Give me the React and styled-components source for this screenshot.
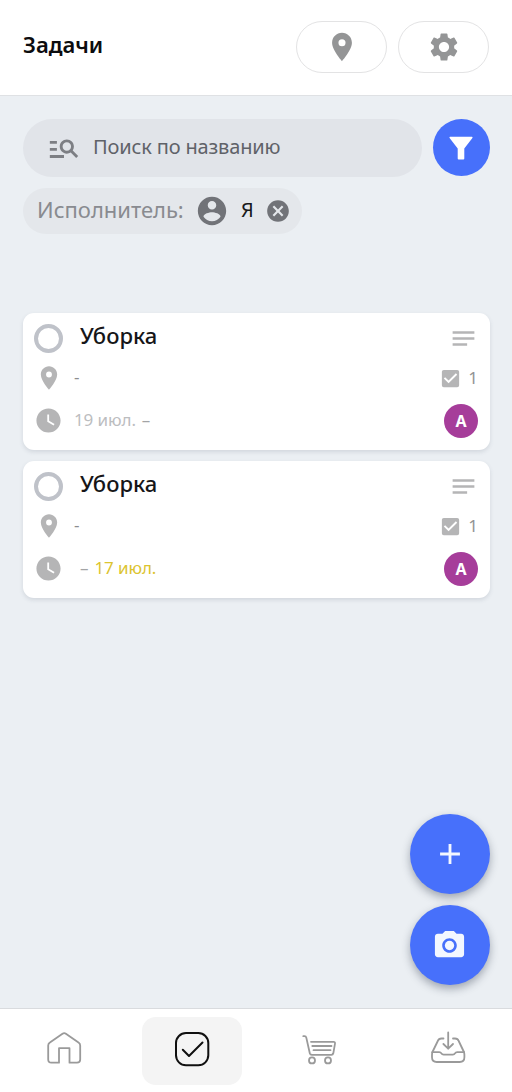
import styled, { createGlobalStyle, css } from "styled-components";
import {
    MdPlace, MdSettings, MdManageSearch, MdCancel,
    MdNotes, MdCheckBox, MdWatchLater, MdAdd, MdPhotoCamera,
} from "react-icons/md";

const tasks = [
    { id: 1, title: "Уборка", place: "-", from: "19 июл.", to: "", checks: 1, user: "A" },
    { id: 2, title: "Уборка", place: "-", from: "", to: "17 июл.", checks: 1, user: "A" },
];

const FilterIcon = () => (
    <svg width="24" height="24" viewBox="0 0 24 24" fill="#fff">
        <path d="M1 .8h22q1 .2.4 1.100L15.300 12.500v10q0 1-1 1H9.700q-1 0-1-1v-10L.6 1.900Q0 1 1 .8z" />
    </svg>
)

const UserIcon = () => (
    <svg width="34" height="34" viewBox="0 0 24 24" fill="currentColor">
        <path d="M12 2C6.480 2 2 6.480 2 12s4.480 10 10 10 10-4.480 10-10S17.520 2 12 2zm0 3c1.660 0 3 1.340 3 3s-1.340 3-3 3-3-1.340-3-3 1.340-3 3-3zm0 14.200c-2.500 0-4.710-1.280-6-3.220.030-1.990 4-3.080 6-3.080 1.990 0 5.970 1.090 6 3.080-1.290 1.940-3.500 3.220-6 3.220z" />
    </svg>
)

const HomeIcon = () => (
    <NavSvg viewBox="0 0 36 36">
        <path d="M2.200 14.500q0-2 1.700-3L16.500 2.800q1.700-1.200 3.400 0L32.500 11.500q1.700 1 1.700 3V28.500q0 3.200-3.200 3.200h-7.500V17.200H13V31.700H5.400q-3.200 0-3.200-3.200z" />
    </NavSvg>
)

const TasksIcon = () => (
    <NavSvg viewBox="0 0 36 36" $active>
        <rect x="2" y="2" width="32.300" height="32.300" rx="10" />
        <path d="M8.800 18.800l6.200 6.200L28.500 11.500" />
    </NavSvg>
)

const CartIcon = () => (
    <NavSvg viewBox="0 0 36 36">
        <path d="M1.300 5.200h1.200q1.500 0 1.800 1.400L7.800 22.300q.4 1.500 2 1.500h19.500q1.700 0 2-1.500L33 12.600q.3-1.800-1.500-1.800H9" />
        <path d="M10.300 15h19.200M11.500 19.200h17" />
        <circle cx="10" cy="29.400" r="3" />
        <circle cx="26" cy="29.400" r="3" />
    </NavSvg>
)

const InboxIcon = () => (
    <NavSvg viewBox="0 0 36 36">
        <path d="M13.500 7.500h-2q-2.800 0-3.700 2.500L2.700 20.500Q2 22 2 23.700v2.600q0 4.700 4.700 4.700h23q4.700 0 4.700-4.700v-2.600q0-1.700-.7-3.200L28.700 10q-.9-2.500-3.700-2.500h-2" />
        <path d="M2.200 21.200h7q1.500 0 2.200 1.200t2.200 1.200h9.200q1.500 0 2.200-1.200t2.200-1.200h7" />
        <path d="M18.200 1.500v16.200M13.400 13l4.800 4.700L23 13" />
    </NavSvg>
)

const Task = ({ task }) => {
    return (
        <Card>
            <IconCell><Ring /></IconCell>
            <TaskTitle>{task.title}</TaskTitle>
            <Side><MdNotes size={29} /></Side>

            <IconCell><MdPlace size={28} /></IconCell>
            <Place>{task.place}</Place>
            <Side><MdCheckBox size={23} /><Count>{task.checks}</Count></Side>

            <IconCell><MdWatchLater size={29} /></IconCell>
            <Dates $indent={!task.from}>
                {task.from && <From>{task.from}</From>}
                <span>–</span>
                {task.to && <Due>{task.to}</Due>}
            </Dates>
            <Side><Avatar>{task.user}</Avatar></Side>
        </Card>
    )
}

export default function App() {
    return (
        <>
            <GlobalStyle />
            <Page>
                <Header>
                    <Title>Задачи</Title>
                    <PillButton aria-label="Карта"><MdPlace size={34} /></PillButton>
                    <PillButton aria-label="Настройки"><MdSettings size={34} /></PillButton>
                </Header>
                <Main>
                    <SearchRow>
                        <Search>
                            <MdManageSearch size={34} />
                            <Placeholder>Поиск по названию</Placeholder>
                        </Search>
                        <FilterButton aria-label="Фильтр"><FilterIcon /></FilterButton>
                    </SearchRow>
                    <Chip>
                        <ChipLabel>Исполнитель:</ChipLabel>
                        <UserIcon />
                        <ChipValue>Я</ChipValue>
                        <MdCancel size={26} />
                    </Chip>
                    <List>
                        {tasks.map((task) => <Task key={task.id} task={task} />)}
                    </List>
                    <Fabs>
                        <Fab aria-label="Добавить"><MdAdd size={34} /></Fab>
                        <Fab aria-label="Камера"><MdPhotoCamera size={35} /></Fab>
                    </Fabs>
                </Main>
                <Nav>
                    <NavItem><HomeIcon /></NavItem>
                    <NavItem $active><TasksIcon /></NavItem>
                    <NavItem><CartIcon /></NavItem>
                    <NavItem><InboxIcon /></NavItem>
                </Nav>
            </Page>
        </>
    );
}

const GlobalStyle = createGlobalStyle`
    * {
        box-sizing: border-box;
    }
    body {
        margin: 0;
        font-family: "Noto Sans", "Open Sans", sans-serif;
    }
    svg {
        display: block;
        flex-shrink: 0;
    }
    button {
        font: inherit;
        padding: 0;
        border: 0;
    }
`;

const center = css`
    display: flex;
    align-items: center;
    justify-content: center;
`;

const Page = styled.div`
    display: flex;
    flex-direction: column;
    height: 1092px;
    background: #ebeff3;
`;

const Header = styled.header`
    display: flex;
    align-items: center;
    gap: 11px;
    height: 96px;
    padding: 0 23px 2px 23px;
    background: #fff;
    border-bottom: 1px solid #dfe1e4;
`;

const Title = styled.h1`
    flex: 1;
    margin: 0;
    padding-bottom: 6px;
    font-size: 22px;
    line-height: 30px;
    font-weight: 600;
    color: #0c0c0e;
`;

const PillButton = styled.button`
    ${center}
    width: 91px;
    height: 52px;
    border: 1.5px solid #e3e3e4;
    border-radius: 26px;
    background: #fff;
    color: #949596;
`;

const Main = styled.main`
    flex: 1;
    display: flex;
    flex-direction: column;
    padding: 23px 22.5px 23px 23px;
`;

const SearchRow = styled.div`
    display: flex;
    align-items: center;
    gap: 11px;
`;

const Search = styled.div`
    flex: 1;
    display: flex;
    align-items: center;
    height: 58px;
    padding-left: 24px;
    gap: 12px;
    border-radius: 29px;
    background: #e1e4e9;
    color: #7d7f84;
`;

const Placeholder = styled.span`
    padding-bottom: 3px;
    font-size: 20px;
    line-height: 28px;
    letter-spacing: -0.16px;
    white-space: nowrap;
    color: #5f6268;
`;

const FilterButton = styled.button`
    ${center}
    width: 57px;
    height: 57px;
    margin-bottom: 1px;
    border-radius: 50%;
    background: #4770fb;
`;

const Chip = styled.div`
    display: flex;
    align-items: center;
    width: 279px;
    height: 46px;
    margin-top: 11px;
    padding-left: 14px;
    border-radius: 23px;
    background: #e4e7eb;
    color: #717378;
`;

const ChipLabel = styled.span`
    width: 158px;
    padding-bottom: 4px;
    font-size: 22px;
    line-height: 30px;
    white-space: nowrap;
    color: #898b90;
`;

const ChipValue = styled.span`
    width: 36px;
    padding: 0 0 2px 12px;
    font-size: 20px;
    line-height: 28px;
    color: #18191b;
`;

const List = styled.div`
    display: flex;
    flex-direction: column;
    gap: 11px;
    margin-top: 79px;
`;

const Card = styled.article`
    display: grid;
    grid-template-columns: 51px 1fr auto;
    grid-template-rows: 45px 34px 51px;
    height: 137px;
    padding: 3px 11.5px 0 0;
    border-radius: 11px;
    background: #fff;
    box-shadow: 0 2px 4px rgba(60, 70, 90, 0.14);
    color: #b5b5b6;
`;

const IconCell = styled.div`
    ${center}
`;

const Ring = styled.span`
    width: 29px;
    height: 29px;
    border: 4px solid #bfc2c9;
    border-radius: 50%;
`;

const TaskTitle = styled.h2`
    margin: 0;
    padding: 4px 0 0 6px;
    font-size: 22px;
    line-height: 30px;
    font-weight: 500;
    color: #161618;
`;

const Place = styled.span`
    align-self: center;
    padding-bottom: 3px;
    font-size: 17px;
    line-height: 24px;
    color: #8c8d8f;
`;

const Side = styled.div`
    display: flex;
    align-items: center;
    justify-content: flex-end;
`;

const Count = styled.span`
    padding: 0 0 1px 6px;
    font-size: 17px;
    line-height: 24px;
    color: #929395;
`;

const Dates = styled.div`
    display: flex;
    align-items: center;
    gap: 6px;
    padding: 0 0 2px ${({ $indent }) => ($indent ? "6px" : "0")};
    font-size: 17px;
    line-height: 24px;
    letter-spacing: -0.1px;
    color: #a3a4a6;
`;

const From = styled.span`
    color: #bcbdbf;
`;

const Due = styled.span`
    color: #dcc42f;
`;

const Avatar = styled.span`
    ${center}
    width: 34px;
    height: 34px;
    border-radius: 50%;
    background: #a63d9a;
    color: #fff;
    font-size: 16px;
    font-weight: 700;
`;

const Fabs = styled.div`
    display: flex;
    flex-direction: column;
    align-items: flex-end;
    gap: 11px;
    margin-top: auto;
`;

const Fab = styled.button`
    ${center}
    width: 80px;
    height: 80px;
    border-radius: 50%;
    background: #4770fb;
    color: #f3f7ff;
    box-shadow: 0 4px 9px rgba(40, 50, 70, 0.38);
`;

const Nav = styled.nav`
    display: grid;
    grid-template-columns: repeat(4, 1fr);
    justify-items: center;
    height: 84px;
    padding-top: 8px;
    background: #fff;
    border-top: 1px solid #d9dbde;
`;

const NavItem = styled.a`
    ${center}
    width: 100px;
    height: 68px;
    padding-bottom: 4px;
    border-radius: 14px;
    background: ${({ $active }) => ($active ? "#f4f4f4" : "transparent")};
`;

const NavSvg = styled.svg`
    width: 36px;
    height: 36px;
    fill: none;
    stroke: ${({ $active }) => ($active ? "#101010" : "#9a9a9a")};
    stroke-width: ${({ $active }) => ($active ? 2 : 1.8)};
    stroke-linecap: round;
    stroke-linejoin: round;
`;
